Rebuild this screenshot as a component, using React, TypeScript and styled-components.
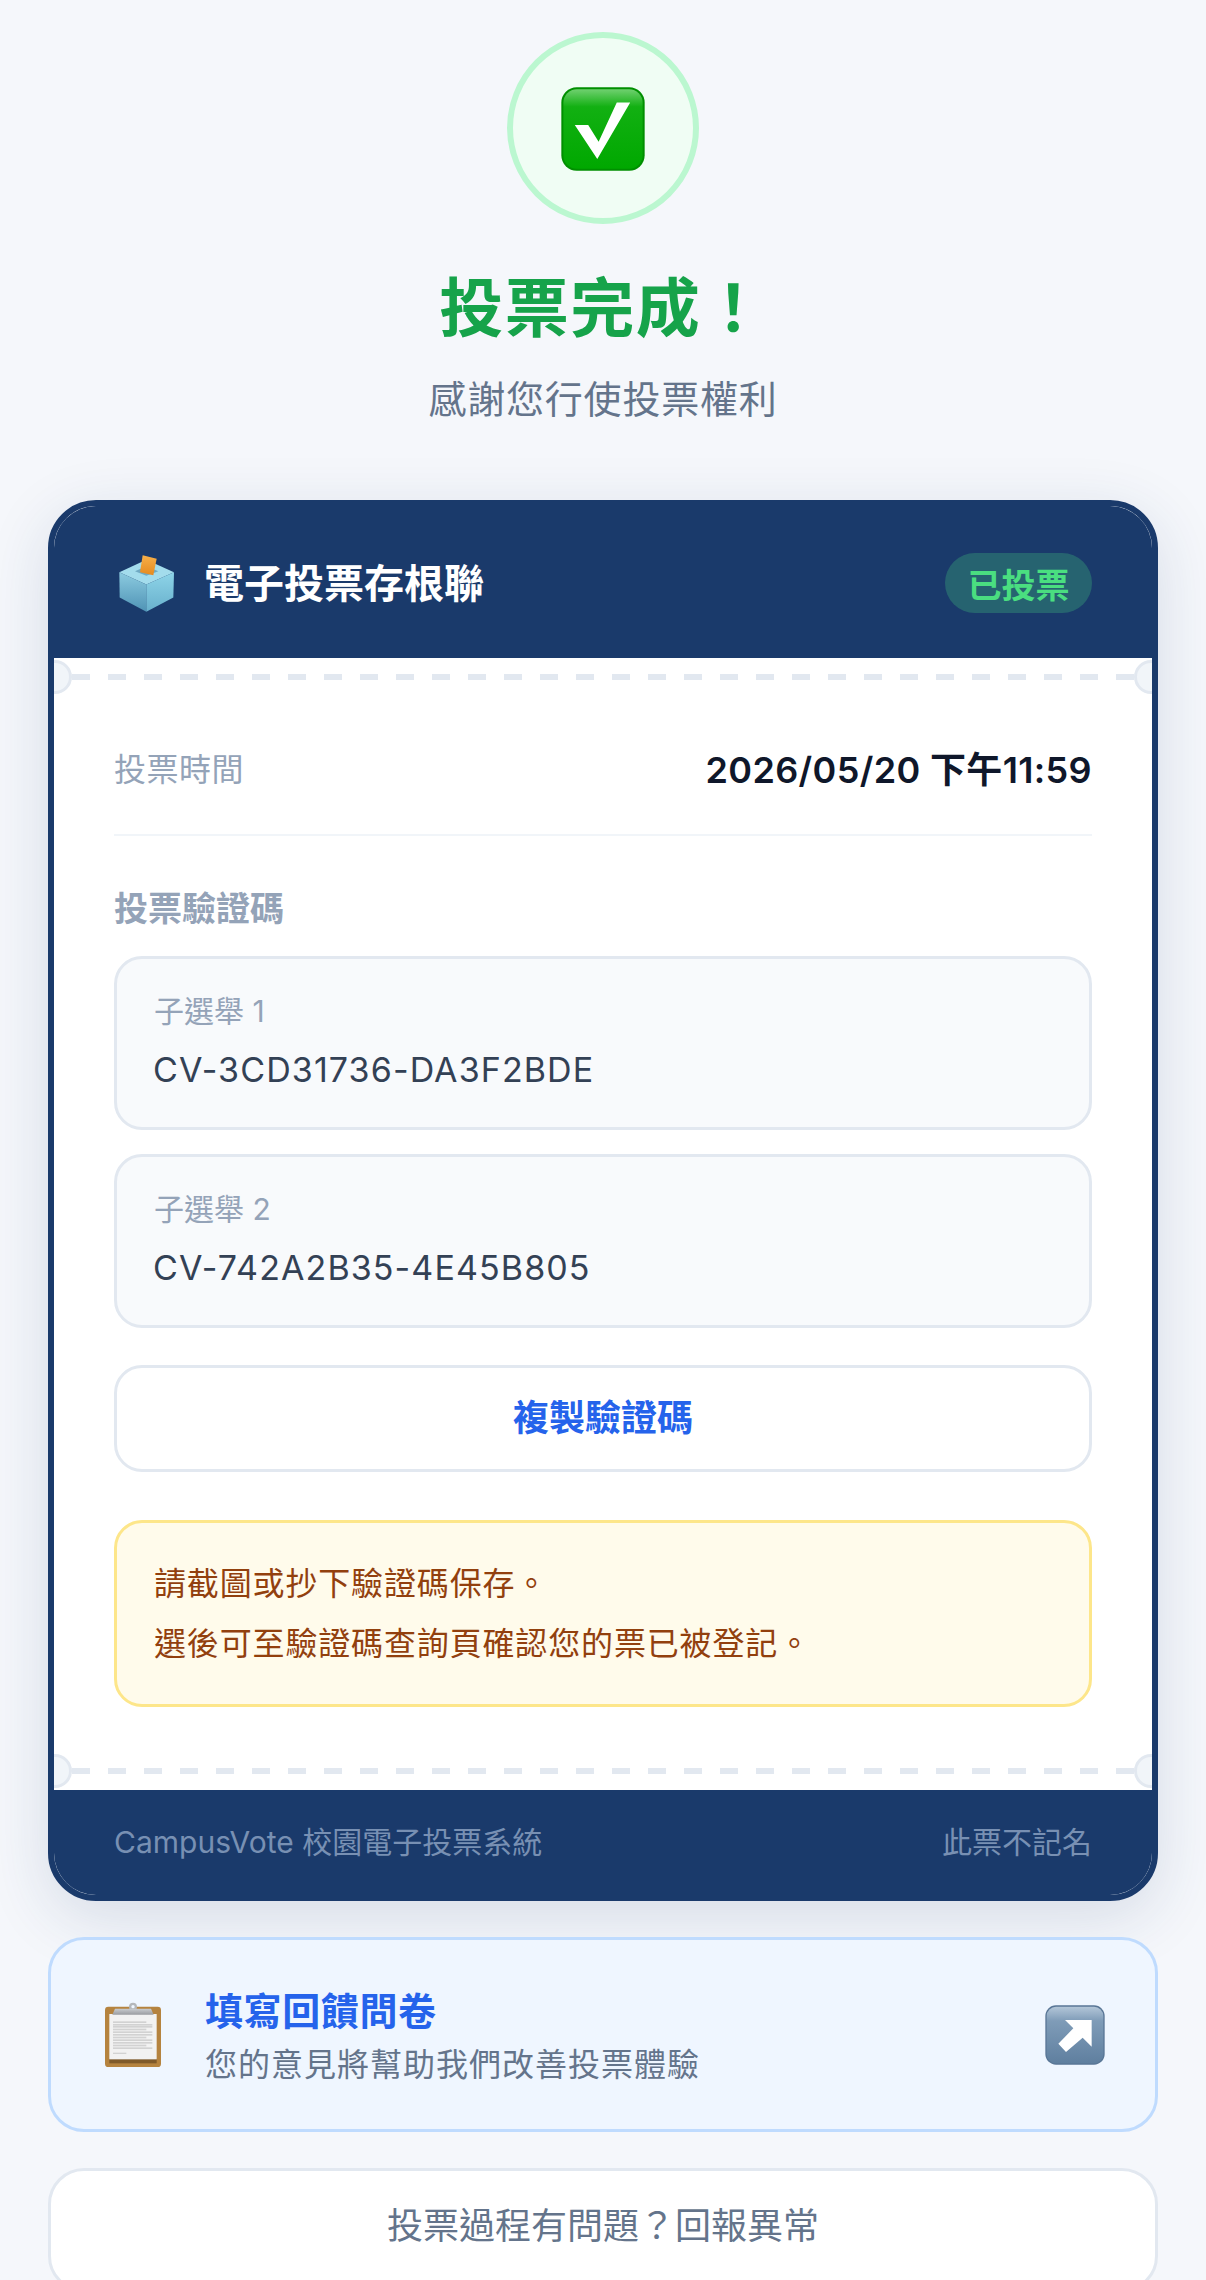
/**
 * 投票完成頁面
 * @description 投票後顯示電子存根聯與驗證碼
 */

import React from 'react';
import styled, {createGlobalStyle} from 'styled-components';

// ==================== 常量 ====================

const NAVY = '#1a3a6b';
const FONT_STACK = 'Inter, "Noto Sans CJK TC", "Noto Sans", sans-serif';

const VERIFY_CODES = [
    {label: '子選舉 1', code: 'CV-3CD31736-DA3F2BDE'},
    {label: '子選舉 2', code: 'CV-742A2B35-4E45B805'},
];

// ==================== 樣式組件 ====================

const GlobalStyle = createGlobalStyle`
  html, body {
    margin: 0;
    padding: 0;
    background: #f5f7fb;
  }

  * {
    box-sizing: border-box;
  }
`;

const Page = styled.div`
  height: 2280px;
  overflow: hidden;
  padding: 32px 48px 0;
  background: #f5f7fb;
  font-family: ${FONT_STACK};
  display: flex;
  flex-direction: column;
`;

const Hero = styled.div`
  flex: none;
  display: flex;
  flex-direction: column;
  align-items: center;
`;

const SuccessCircle = styled.div`
  width: 192px;
  height: 192px;
  padding-top: 2px;
  border-radius: 50%;
  border: 6px solid #bbf7d0;
  background: #f0fdf4;
  display: flex;
  align-items: center;
  justify-content: center;
`;

const HeroTitle = styled.h1`
  margin: 42px 0 0;
  font-size: 64px;
  line-height: 84px;
  font-weight: 700;
  color: #16a34a;
  letter-spacing: 1.5px;
`;

const HeroSubtitle = styled.p`
  margin: 23px 0 1px;
  font-size: 38px;
  line-height: 52px;
  color: #64748b;
  letter-spacing: 0.8px;
`;

// 存根聯卡片
const Ticket = styled.div`
  flex: none;
  margin-top: 74px;
  border: 6px solid ${NAVY};
  border-radius: 48px;
  background: #ffffff;
  overflow: hidden;
  box-shadow: 0 16px 64px rgba(26, 58, 107, 0.14);
`;

const TicketHeader = styled.div`
  height: 152px;
  padding: 0 60px 0 65px;
  background: ${NAVY};
  display: flex;
  align-items: center;
  justify-content: space-between;
`;

const TicketBrand = styled.div`
  display: flex;
  align-items: center;
  gap: 30px;
`;

const BallotSlot = styled.div`
  display: flex;
  margin-top: 3px;
`;

const TicketTitle = styled.span`
  margin-bottom: 3px;
  font-size: 40px;
  font-weight: 700;
  color: #ffffff;
`;

const VotedBadge = styled.span`
  height: 60px;
  margin-top: 2px;
  padding: 0 22.5px;
  border-radius: 30px;
  background: rgba(74, 222, 128, 0.25);
  color: #4ade80;
  font-size: 34px;
  font-weight: 700;
  display: flex;
  align-items: center;
`;

// 撕線：兩端半圓缺口 + 虛線
const Perforation = styled.div`
  position: relative;
  height: 38px;
  display: flex;
  align-items: center;
  padding: 0 18px;
  background: #ffffff;
`;

const DashLine = styled.div`
  flex: 1;
  height: 6px;
  background: repeating-linear-gradient(90deg, #e2e8f0 0 18px, transparent 18px 36px);
`;

const Notch = styled.div<{ $side: 'left' | 'right' }>`
  position: absolute;
  top: 2px;
  ${props => props.$side}: -16px;
  width: 34px;
  height: 34px;
  border-radius: 50%;
  border: 3px solid #e2e8f0;
  background: #f1f5f9;
`;

const TicketBody = styled.div`
  padding: 48px 60px 45px;
`;

const TimeRow = styled.div`
  display: flex;
  align-items: center;
  justify-content: space-between;
  padding-bottom: 38px;
  border-bottom: 2px solid #f1f5f9;
  line-height: 52px;
`;

const TimeLabel = styled.span`
  font-size: 32px;
  color: #94a3b8;
  letter-spacing: 0.5px;
`;

const TimeValue = styled.span`
  font-size: 36px;
  font-weight: 600;
  color: #0f172a;
  letter-spacing: 0.35px;
`;

const SectionLabel = styled.div`
  margin: 49px 0 23px;
  font-size: 34px;
  line-height: 48px;
  font-weight: 700;
  color: #94a3b8;
`;

const CodeList = styled.div`
  display: flex;
  flex-direction: column;
  gap: 24px;
`;

const CodeBox = styled.div`
  padding: 32px 37px 34px;
  border: 3px solid #e2e8f0;
  border-radius: 28px;
  background: #f8fafc;
`;

const CodeLabel = styled.div`
  font-size: 30px;
  line-height: 40px;
  color: #94a3b8;
`;

const CodeValue = styled.div`
  margin-top: 16px;
  margin-left: -1px;
  font-size: 34px;
  line-height: 46px;
  color: #334155;
  letter-spacing: 1.1px;
`;

const CopyButton = styled.button`
  display: block;
  width: 100%;
  height: 107px;
  margin-top: 37px;
  padding: 0 0 8px;
  border: 3px solid #e2e8f0;
  border-radius: 28px;
  background: #ffffff;
  color: #2563eb;
  font-family: inherit;
  font-size: 36px;
  font-weight: 700;
`;

const Notice = styled.div`
  margin-top: 48px;
  height: 187px;
  padding: 31px 37px;
  border: 3px solid #fde68a;
  border-radius: 28px;
  background: #fffbeb;
  color: #92400e;
  font-size: 32px;
  line-height: 60px;
  letter-spacing: 0.85px;
`;

const TicketFooter = styled.div`
  height: 105px;
  padding: 0 60px 6px;
  background: ${NAVY};
  display: flex;
  align-items: center;
  justify-content: space-between;
  color: #7890b3;
  font-size: 30px;
`;

// 回饋問卷入口
const FeedbackCard = styled.div`
  flex: none;
  margin-top: 36px;
  height: 195px;
  padding: 0 50px 0 54px;
  border: 3px solid #bfdbfe;
  border-radius: 36px;
  background: #eff6ff;
  display: flex;
  align-items: center;
  gap: 44px;
`;

const FeedbackText = styled.div`
  flex: 1;
  display: flex;
  flex-direction: column;
  gap: 4px;
`;

const FeedbackTitle = styled.div`
  font-size: 38px;
  line-height: 56px;
  font-weight: 700;
  color: #2563eb;
  letter-spacing: 0.6px;
`;

const FeedbackDesc = styled.div`
  font-size: 32px;
  line-height: 44px;
  color: #64748b;
  letter-spacing: 1px;
`;

const ReportButton = styled.button`
  flex: none;
  margin-top: 36px;
  height: 124px;
  padding: 0 0 14px;
  border: 3px solid #e2e8f0;
  border-radius: 36px;
  background: #ffffff;
  color: #64748b;
  font-family: inherit;
  font-size: 36px;
`;

// ==================== 圖示 ====================

const CheckEmoji: React.FC = () => (
    <svg width="84" height="84" viewBox="0 0 250 250">
        <defs>
            <linearGradient id="checkBg" x1="0" y1="0" x2="0" y2="1">
                <stop offset="0" stopColor="#6fd06f"/>
                <stop offset="0.22" stopColor="#12b012"/>
                <stop offset="1" stopColor="#00a800"/>
            </linearGradient>
        </defs>
        <rect x="1" y="1" width="248" height="248" rx="46" fill="#008f00"/>
        <rect x="7" y="7" width="236" height="236" rx="40" fill="url(#checkBg)"/>
        <polygon points="41,113 81,113 112,163 166,46 206,46 108,214" fill="#ffffff"/>
    </svg>
);

const BallotEmoji: React.FC = () => (
    <svg width="55" height="57" viewBox="0 0 165 170">
        <defs>
            <linearGradient id="ballotLeft" x1="0" y1="0" x2="0" y2="1">
                <stop offset="0" stopColor="#8ccbe0"/>
                <stop offset="1" stopColor="#4f93b5"/>
            </linearGradient>
            <linearGradient id="ballotRight" x1="0" y1="0" x2="0" y2="1">
                <stop offset="0" stopColor="#8ed4e8"/>
                <stop offset="1" stopColor="#68b0cc"/>
            </linearGradient>
            <linearGradient id="ballotPaper" x1="0" y1="0" x2="0" y2="1">
                <stop offset="0" stopColor="#f7b04a"/>
                <stop offset="1" stopColor="#e58a1f"/>
            </linearGradient>
        </defs>
        <polygon points="1,51 82,14 165,51 82,88" fill="#a3dcec"/>
        <polygon points="48,48 82,33 118,48 82,62" fill="#6fa9c2"/>
        <polygon points="71,0 113,11 103,60 63,51" fill="url(#ballotPaper)"/>
        <polygon points="1,51 82,88 82,170 2,127" fill="url(#ballotLeft)"/>
        <polygon points="165,51 82,88 82,170 163,127" fill="url(#ballotRight)"/>
    </svg>
);

const ClipboardEmoji: React.FC = () => {
    // 紙上的細字行，只是灰色線條
    const lines = [58, 66, 72, 80, 88, 96, 104, 112, 120, 128, 136];
    return (
        <svg width="56" height="65" viewBox="0 0 168 195">
            <defs>
                <linearGradient id="clipMetal" x1="0" y1="0" x2="0" y2="1">
                    <stop offset="0" stopColor="#c9ccd0"/>
                    <stop offset="1" stopColor="#9a9ca0"/>
                </linearGradient>
            </defs>
            <rect x="0" y="14" width="168" height="181" rx="10" fill="#b5833f"/>
            <rect x="13" y="170" width="142" height="14" fill="#7f5a2a"/>
            <rect x="13" y="36" width="142" height="136" fill="#f2f2f2"/>
            {lines.map((y, index) => (
                <rect key={y} x="24" y={y} width={index % 3 === 0 ? 100 : 118} height="5" fill="#d2d2d2"/>
            ))}
            <rect x="24" y="152" width="40" height="4" fill="#d2d2d2"/>
            <circle cx="84" cy="14" r="12" fill="#b4b7bb"/>
            <circle cx="84" cy="14" r="5" fill="#eff6ff"/>
            <path d="M30 20 H138 L146 38 H22 Z" fill="url(#clipMetal)"/>
        </svg>
    );
};

const ArrowEmoji: React.FC = () => (
    <svg width="60" height="60" viewBox="0 0 180 180">
        <defs>
            <linearGradient id="arrowBg" x1="0" y1="0" x2="0" y2="1">
                <stop offset="0" stopColor="#b3c6d8"/>
                <stop offset="0.25" stopColor="#7f9cb8"/>
                <stop offset="1" stopColor="#5f7f9f"/>
            </linearGradient>
        </defs>
        <rect x="1" y="1" width="178" height="178" rx="32" fill="#597696"/>
        <rect x="5" y="5" width="170" height="170" rx="28" fill="url(#arrowBg)"/>
        <polygon points="60,45 140,45 140,125 113,98 63,141 40,116 85,70" fill="#ffffff"/>
    </svg>
);

// ==================== 子組件 ====================

const PerforationLine: React.FC = () => (
    <Perforation>
        <Notch $side="left"/>
        <DashLine/>
        <Notch $side="right"/>
    </Perforation>
);

// ==================== 主組件 ====================

const App: React.FC = () => {
    return (
        <Page>
            <GlobalStyle/>
            <Hero>
                <SuccessCircle>
                    <CheckEmoji/>
                </SuccessCircle>
                <HeroTitle>投票完成！</HeroTitle>
                <HeroSubtitle>感謝您行使投票權利</HeroSubtitle>
            </Hero>

            <Ticket>
                <TicketHeader>
                    <TicketBrand>
                        <BallotSlot>
                            <BallotEmoji/>
                        </BallotSlot>
                        <TicketTitle>電子投票存根聯</TicketTitle>
                    </TicketBrand>
                    <VotedBadge>已投票</VotedBadge>
                </TicketHeader>
                <PerforationLine/>
                <TicketBody>
                    <TimeRow>
                        <TimeLabel>投票時間</TimeLabel>
                        <TimeValue>2026/05/20 下午11:59</TimeValue>
                    </TimeRow>
                    <SectionLabel>投票驗證碼</SectionLabel>
                    <CodeList>
                        {VERIFY_CODES.map((item) => (
                            <CodeBox key={item.code}>
                                <CodeLabel>{item.label}</CodeLabel>
                                <CodeValue>{item.code}</CodeValue>
                            </CodeBox>
                        ))}
                    </CodeList>
                    <CopyButton>複製驗證碼</CopyButton>
                    <Notice>
                        <div>請截圖或抄下驗證碼保存。</div>
                        <div>選後可至驗證碼查詢頁確認您的票已被登記。</div>
                    </Notice>
                </TicketBody>
                <PerforationLine/>
                <TicketFooter>
                    <span>CampusVote 校園電子投票系統</span>
                    <span>此票不記名</span>
                </TicketFooter>
            </Ticket>

            <FeedbackCard>
                <ClipboardEmoji/>
                <FeedbackText>
                    <FeedbackTitle>填寫回饋問卷</FeedbackTitle>
                    <FeedbackDesc>您的意見將幫助我們改善投票體驗</FeedbackDesc>
                </FeedbackText>
                <ArrowEmoji/>
            </FeedbackCard>

            <ReportButton>投票過程有問題？回報異常</ReportButton>
        </Page>
    );
};

export default App;
